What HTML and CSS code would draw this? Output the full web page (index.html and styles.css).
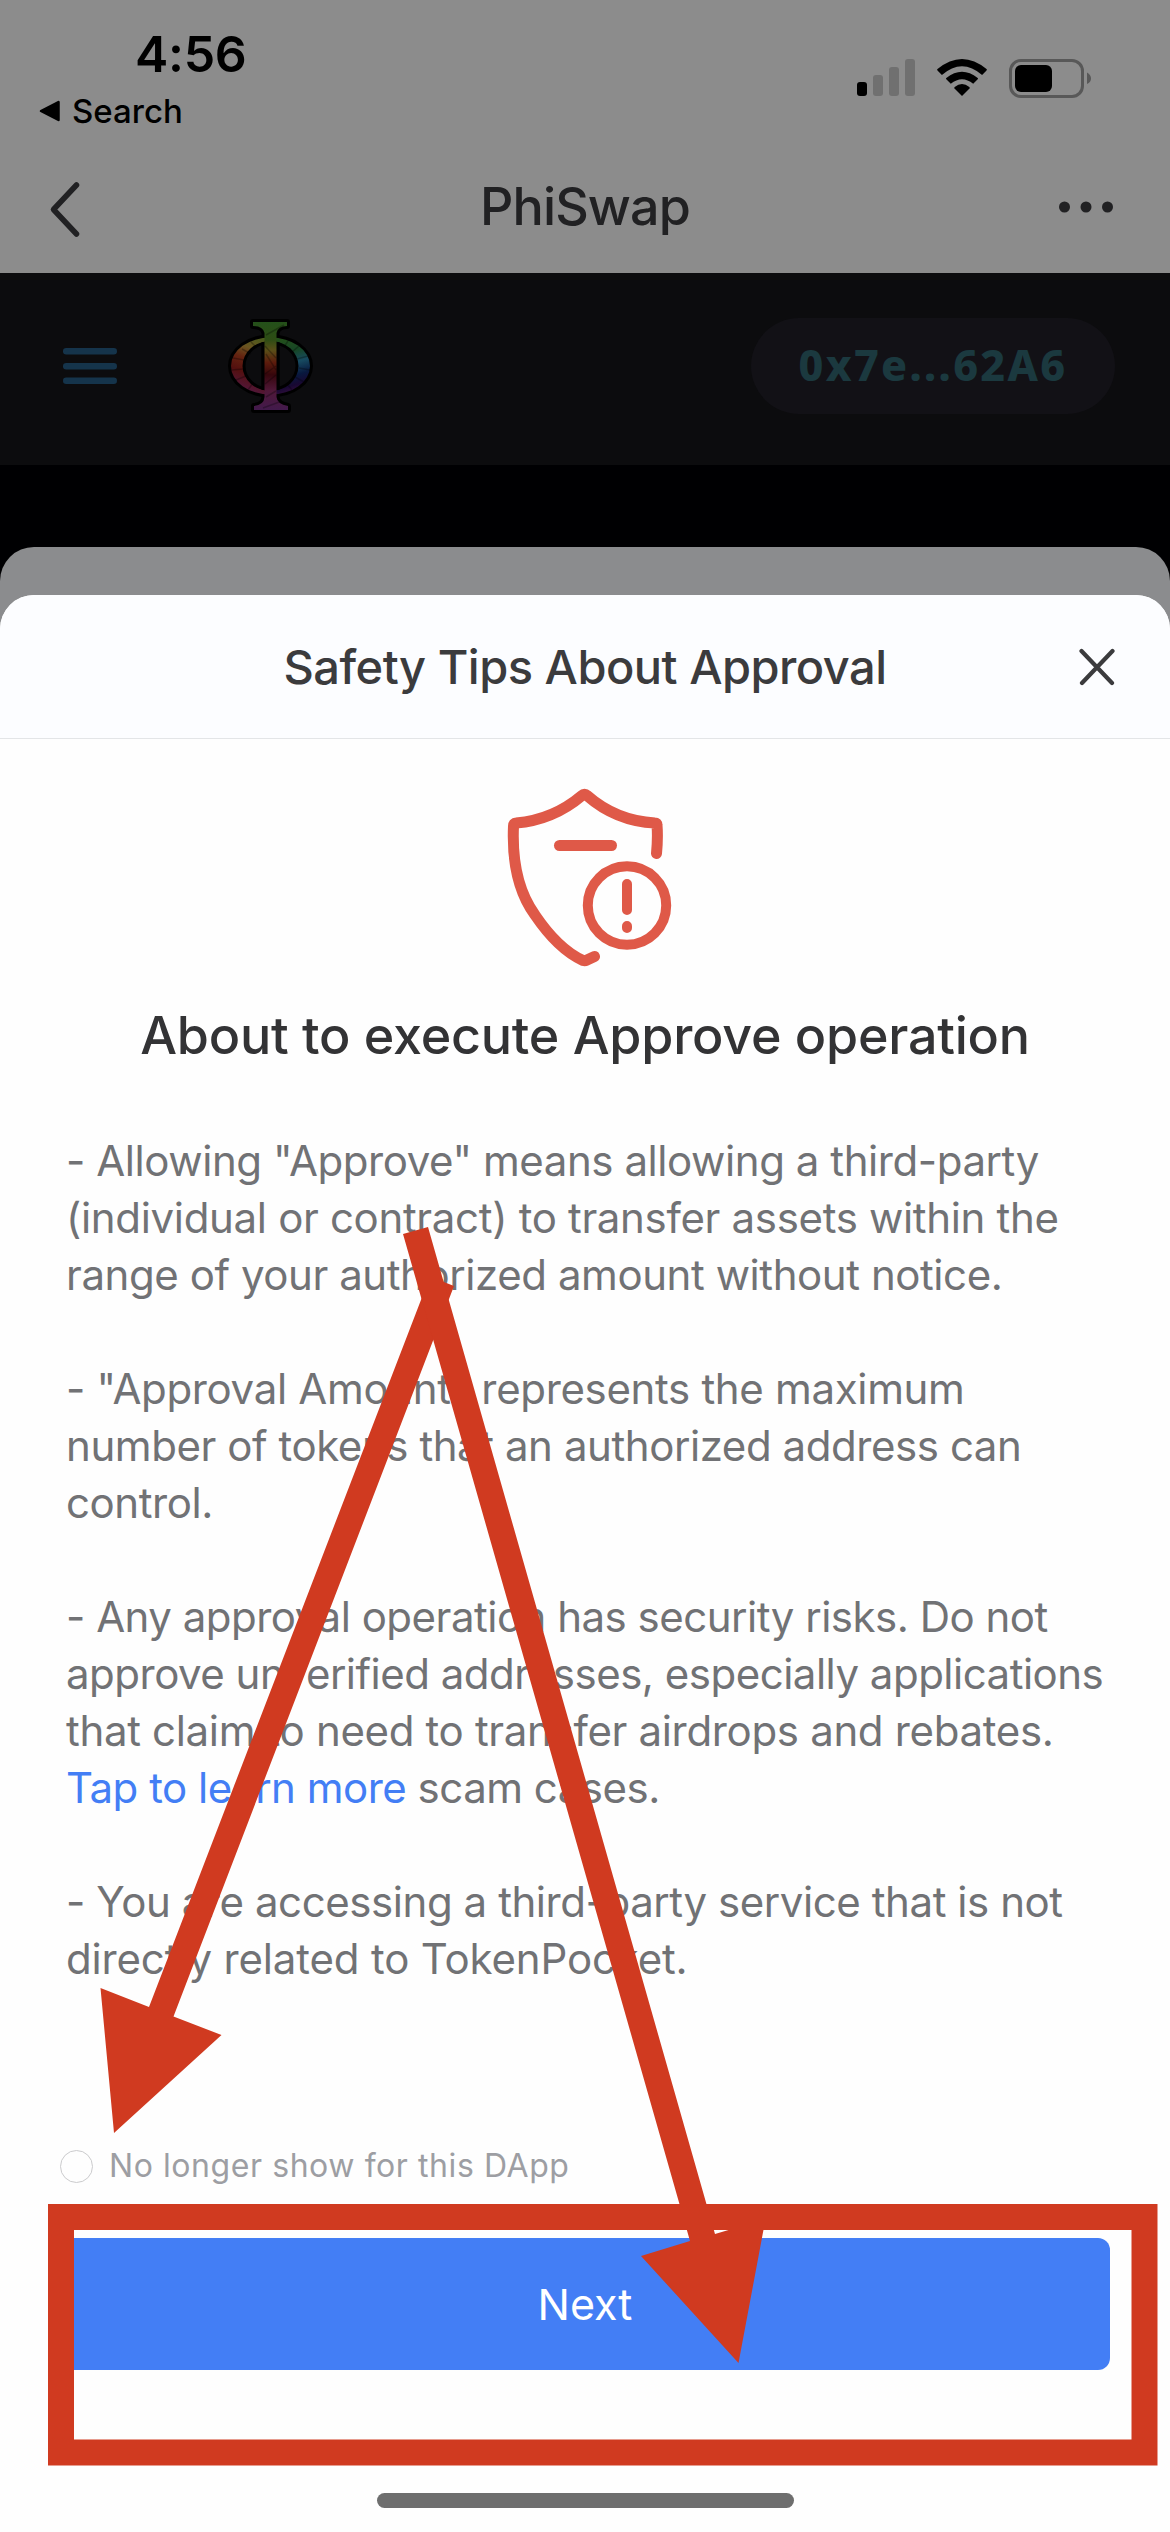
FILE: index.html
```html
<!DOCTYPE html>
<html lang="en">
<head>
<meta charset="utf-8">
<title>Safety Tips About Approval</title>
<link rel="stylesheet" href="styles.css">
</head>
<body>
<div class="screen">
  <header class="top">
    <div class="status">
      <div class="status-left">
        <div class="clock">4:56</div>
        <div class="return">
          <svg width="21" height="22" viewBox="0 0 21 22"><path d="M19.5 2v18L2 11Z" stroke="#000" stroke-width="2.5" stroke-linejoin="round"/></svg>
          <span>Search</span>
        </div>
      </div>
      <div class="status-icons">
        <svg width="58" height="38" viewBox="0 0 58 38">
          <rect x="0" y="23" width="10" height="14" rx="3"/>
          <g fill="#707070"><rect x="16" y="16" width="10" height="21" rx="3"/><rect x="32" y="8" width="10" height="29" rx="3"/><rect x="48" y="0" width="10" height="37" rx="3"/></g>
        </svg>
        <svg width="50" height="38" viewBox="0 0 50 38">
          <path d="M25 37 17.5 29.4Q16.9 28.6 17.7 27.9Q25 22.3 32.3 27.9Q33.1 28.6 32.5 29.4Z"/>
          <path d="M13.8 24.8 9.3 20.3Q8.6 19.6 9.3 18.9Q25 6.5 40.7 18.9Q41.4 19.6 40.7 20.3L36.2 24.8Q25 15.500 13.800 24.800Z"/>
          <path d="M4.900 16 .5 11.500Q-.2 10.800 .5 10.100Q25 -10 49.500 10.100Q50.200 10.800 49.500 11.500L45.100 16Q25 -1.500 4.900 16Z"/>
        </svg>
        <svg width="83" height="39" viewBox="0 0 83 39">
          <rect x="1.500" y="1.500" width="72" height="36" rx="10.500" fill="none" stroke="#585858" stroke-width="3"/>
          <rect x="6" y="6" width="37" height="27" rx="6"/>
          <path d="M78 13.500Q82 16 82 19.500T78 25Z" fill="#585858"/>
        </svg>
      </div>
    </div>
    <nav class="nav">
      <svg class="back" width="34" height="58" viewBox="0 0 34 58"><path d="M28.500 5 5.500 29.500 28.500 54" fill="none" stroke="#212123" stroke-width="5.500" stroke-linecap="round" stroke-linejoin="round"/></svg>
      <h1 class="nav-title">PhiSwap</h1>
      <svg class="more" width="54" height="12" viewBox="0 0 54 12" fill="#212123"><circle cx="5.500" cy="6" r="5.500"/><circle cx="27" cy="6" r="5.500"/><circle cx="48.500" cy="6" r="5.500"/></svg>
    </nav>
  </header>

  <section class="dapp">
    <div class="dapp-left">
      <svg width="54" height="36" viewBox="0 0 54 36" fill="#15344b"><rect width="54" height="6.500" rx="3.200"/><rect y="15" width="54" height="6.500" rx="3.200"/><rect y="29.500" width="54" height="6.500" rx="3.200"/></svg>
      <svg width="88" height="98" viewBox="26 17 88 98">
        <defs>
          <linearGradient id="stem" x1="0" y1="0" x2="0" y2="1"><stop offset="0" stop-color="#24501a"/><stop offset=".2" stop-color="#2d4c14"/><stop offset=".32" stop-color="#5a4f18"/><stop offset=".46" stop-color="#5d1c0c"/><stop offset=".6" stop-color="#35060c"/><stop offset=".78" stop-color="#501838"/><stop offset="1" stop-color="#421a4c"/></linearGradient>
          <linearGradient id="warm" x1=".7" y1="0" x2=".45" y2="1"><stop offset="0" stop-color="#4a5a1c"/><stop offset=".22" stop-color="#6a5420"/><stop offset=".42" stop-color="#642210"/><stop offset=".65" stop-color="#53100f"/><stop offset="1" stop-color="#521842"/></linearGradient>
          <linearGradient id="cool" x1=".3" y1="0" x2=".5" y2="1"><stop offset="0" stop-color="#24501a"/><stop offset=".28" stop-color="#164626"/><stop offset=".48" stop-color="#174a60"/><stop offset=".7" stop-color="#08183e"/><stop offset=".86" stop-color="#180832"/><stop offset="1" stop-color="#35103e"/></linearGradient>
        </defs>
        <g stroke="#000" stroke-width="6" stroke-linejoin="round">
          <path d="M70.500 37.500A39.500 28.500 0 0 0 70.500 94.500V91A28 25 0 0 1 70.500 41Z"/>
          <path d="M70.500 37.500A39.500 28.500 0 0 1 70.500 94.500V91A28 25 0 0 0 70.500 41Z"/>
          <path d="M53 22H87V26Q78 26 76.500 33V97Q77 104 88 106V110H54V106Q64 105 64.500 97V33Q63 26 53 26Z"/>
        </g>
        <path fill="url(#warm)" d="M70.500 37.500A39.500 28.500 0 0 0 70.500 94.500V91A28 25 0 0 1 70.500 41Z"/>
        <path fill="url(#cool)" d="M70.500 37.500A39.500 28.500 0 0 1 70.500 94.500V91A28 25 0 0 0 70.500 41Z"/>
        <path d="M63 42V90M78 42V90" stroke="#000" stroke-width="3"/>
        <path fill="url(#stem)" d="M53 22H87V26Q78 26 76.500 33V97Q77 104 88 106V110H54V106Q64 105 64.500 97V33Q63 26 53 26Z"/>
        <g stroke="#000" stroke-opacity=".28" stroke-width="1.500"><path d="M66 35 84 25M65 46 76 58M66 54 76 70M65 74 76 66M65 84 76 75M66 97 76 91M63 108 82 101M33 58 44 60M32 70 43 69M36 80 46 76M48 90 53 83M42 49 51 54M51 42 57 48M84 47 88 41M92 52 99 46M97 59 108 56M99 68 110 70M95 77 104 82M87 84 92 90"/></g>
      </svg>
    </div>
    <div class="wallet">0x7e...62A6</div>
  </section>

  <section class="sheet-back">
    <div class="sheet">
      <div class="sheet-head">
        <h2 class="sheet-title">Safety Tips About Approval</h2>
        <svg class="close" width="36" height="38" viewBox="0 0 36 38"><path d="M2.500 3 33 35M33.500 3 3 35" stroke="#3b3b3d" stroke-width="4.200" stroke-linecap="round"/></svg>
      </div>
      <div class="sheet-body">
        <svg class="shield" width="170" height="184" viewBox="25 25 170 184" fill="none" stroke="#df5948" stroke-width="11" stroke-linecap="round" stroke-linejoin="round">
          <path d="M176.500 93.500Q178 78 177 65Q177 63 175 63Q136 61 107 35.500Q104.500 33 102 35.500Q73 60 36 63Q33.500 63 33.500 66Q31 122 55 155Q78 189 103 200.500Q105 201 107 200L114.500 196.500"/>
          <path d="M79.500 85.500H131.500"/>
          <g stroke-width="10"><circle cx="147" cy="145.500" r="39.200"/><path d="M147 124V150M147 166V168"/></g>
        </svg>
        <h3 class="headline">About to execute Approve operation</h3>
        <div class="tips">
          <p>- Allowing "Approve" means allowing a third-party<br><span class="loose">(individual or contract) to transfer assets within the</span><br>range of your authorized amount without notice.</p>
          <p><span class="loose">- "Approval Amount" represents the maximum</span><br>number of tokens that an authorized address can<br>control.</p>
          <p><span class="tight">- Any approval operation has security risks. Do not</span><br><span class="tight">approve unverified addresses, especially applications</span><br><span class="loose">that claim to need to transfer airdrops and rebates.</span><br><span class="tight"><a class="link">Tap to learn more</a> scam cases.</span></p>
          <p>- You are accessing a third-party service that is not<br><span class="wide">directly related to TokenPocket.</span></p>
        </div>
        <div class="optout"><span class="radio"></span><span>No longer show for this DApp</span></div>
        <div class="next">Next</div>
        <div class="home"></div>
      </div>
    </div>
  </section>

  <svg class="marks" width="1170" height="2532" viewBox="0 0 1170 2532" fill="#d03a20">
    <path d="M454 1286 430 1276.500 149 2007 100.500 1988 114 2133 221.500 2035 173.500 2016.500Z"/>
    <path d="M403 1234 428 1227 715 2234 765.500 2219 738.500 2363 641 2256 690 2241Z"/>
    <path fill-rule="evenodd" d="M48 2204H1157.500V2465.500H48ZM74 2230V2439.500H1131.500V2230Z"/>
  </svg>
</div>
</body>
</html>
```
FILE: styles.css
```css
* { box-sizing: border-box; margin: 0; padding: 0; }
body { background: #000; font-family: Inter, "Liberation Sans", sans-serif; }
svg { display: block; flex: none; }

.screen { position: relative; width: 1170px; height: 2532px; overflow: hidden; background: #000002; }

.top { height: 273px; background: #8c8c8c; }
.status { display: flex; justify-content: space-between; height: 137px; padding: 24px 78px 0 39px; }
.clock { padding-left: 96px; font-size: 50px; line-height: 60px; font-weight: 600; letter-spacing: -.3px; color: #000; }
.return { display: flex; align-items: center; gap: 12px; height: 40px; margin-top: 7px; font-size: 33px; line-height: 40px; font-weight: 500; color: #000; }
.status-icons { display: flex; gap: 22px; padding-top: 35px; }

.nav { display: grid; grid-template-columns: 1fr auto 1fr; align-items: center; height: 136px; padding: 4px 57px 0 57px; }
.back { margin: 4px 0 0 -9px; }
.nav-title { font-size: 52px; line-height: 62px; font-weight: 500; letter-spacing: -.9px; color: #212123; }
.more { justify-self: end; margin-left: auto; }

.dapp { display: flex; align-items: center; justify-content: space-between; height: 192px; padding: 0 55px 6px 63px; background: #0c0c0e; }
.dapp-left { display: flex; align-items: center; gap: 109px; }
.wallet { width: 364px; height: 96px; border-radius: 48px; background: #121116; color: #1b393f; font: 800 43px/94px "Noto Sans", sans-serif; letter-spacing: 2.300px; text-align: center; }

.sheet-back { height: 1985px; margin-top: 82px; padding-top: 48px; border-radius: 34px 34px 0 0; background: #8b8c8e; }
.sheet { height: 1937px; border-radius: 34px 34px 0 0; background: #fefefe; overflow: hidden; }
.sheet-head { display: grid; grid-template-columns: 1fr auto 1fr; align-items: center; height: 144px; padding: 0 55px; background: #fcfdff; border-bottom: 1px solid #e3e5e7; }
.sheet-title { grid-column: 2; font-size: 47px; line-height: 58px; font-weight: 500; letter-spacing: -.5px; color: #3b3b3d; white-space: nowrap; }
.close { justify-self: end; }

.sheet-body { display: flex; flex-direction: column; align-items: center; height: 1793px; padding-top: 46px; }
.shield { margin-left: 10px; }
.headline { margin-top: 35px; font-size: 52px; line-height: 64px; font-weight: 500; letter-spacing: -.23px; color: #333335; white-space: nowrap; }
.tips { display: flex; flex-direction: column; gap: 57px; align-self: stretch; margin-top: 64px; padding-left: 66px; font-size: 42px; line-height: 57px; letter-spacing: -.43px; color: #717275; white-space: nowrap; }
.loose { letter-spacing: -.33px; }
.tight { letter-spacing: -.5px; }
.wide { letter-spacing: -.16px; }
.link { color: #437ef5; }

.optout { display: flex; align-items: center; gap: 16px; align-self: flex-start; height: 40px; margin: 159px 0 0 60px; font-size: 32px; line-height: 40px; letter-spacing: .57px; color: #9d9ea3; white-space: nowrap; }
.radio { width: 33px; height: 33px; border: 1.500px solid #cbcbcd; border-radius: 50%; }
.next { width: 1050px; height: 132px; margin-top: 52px; border-radius: 12px; background: #437ef5; color: #fff; font-size: 43px; line-height: 132px; text-align: center; }
.home { width: 417px; height: 15px; margin-top: 123px; border-radius: 8px; background: #6e6e6e; }

.marks { position: absolute; top: 0; left: 0; pointer-events: none; }
```
